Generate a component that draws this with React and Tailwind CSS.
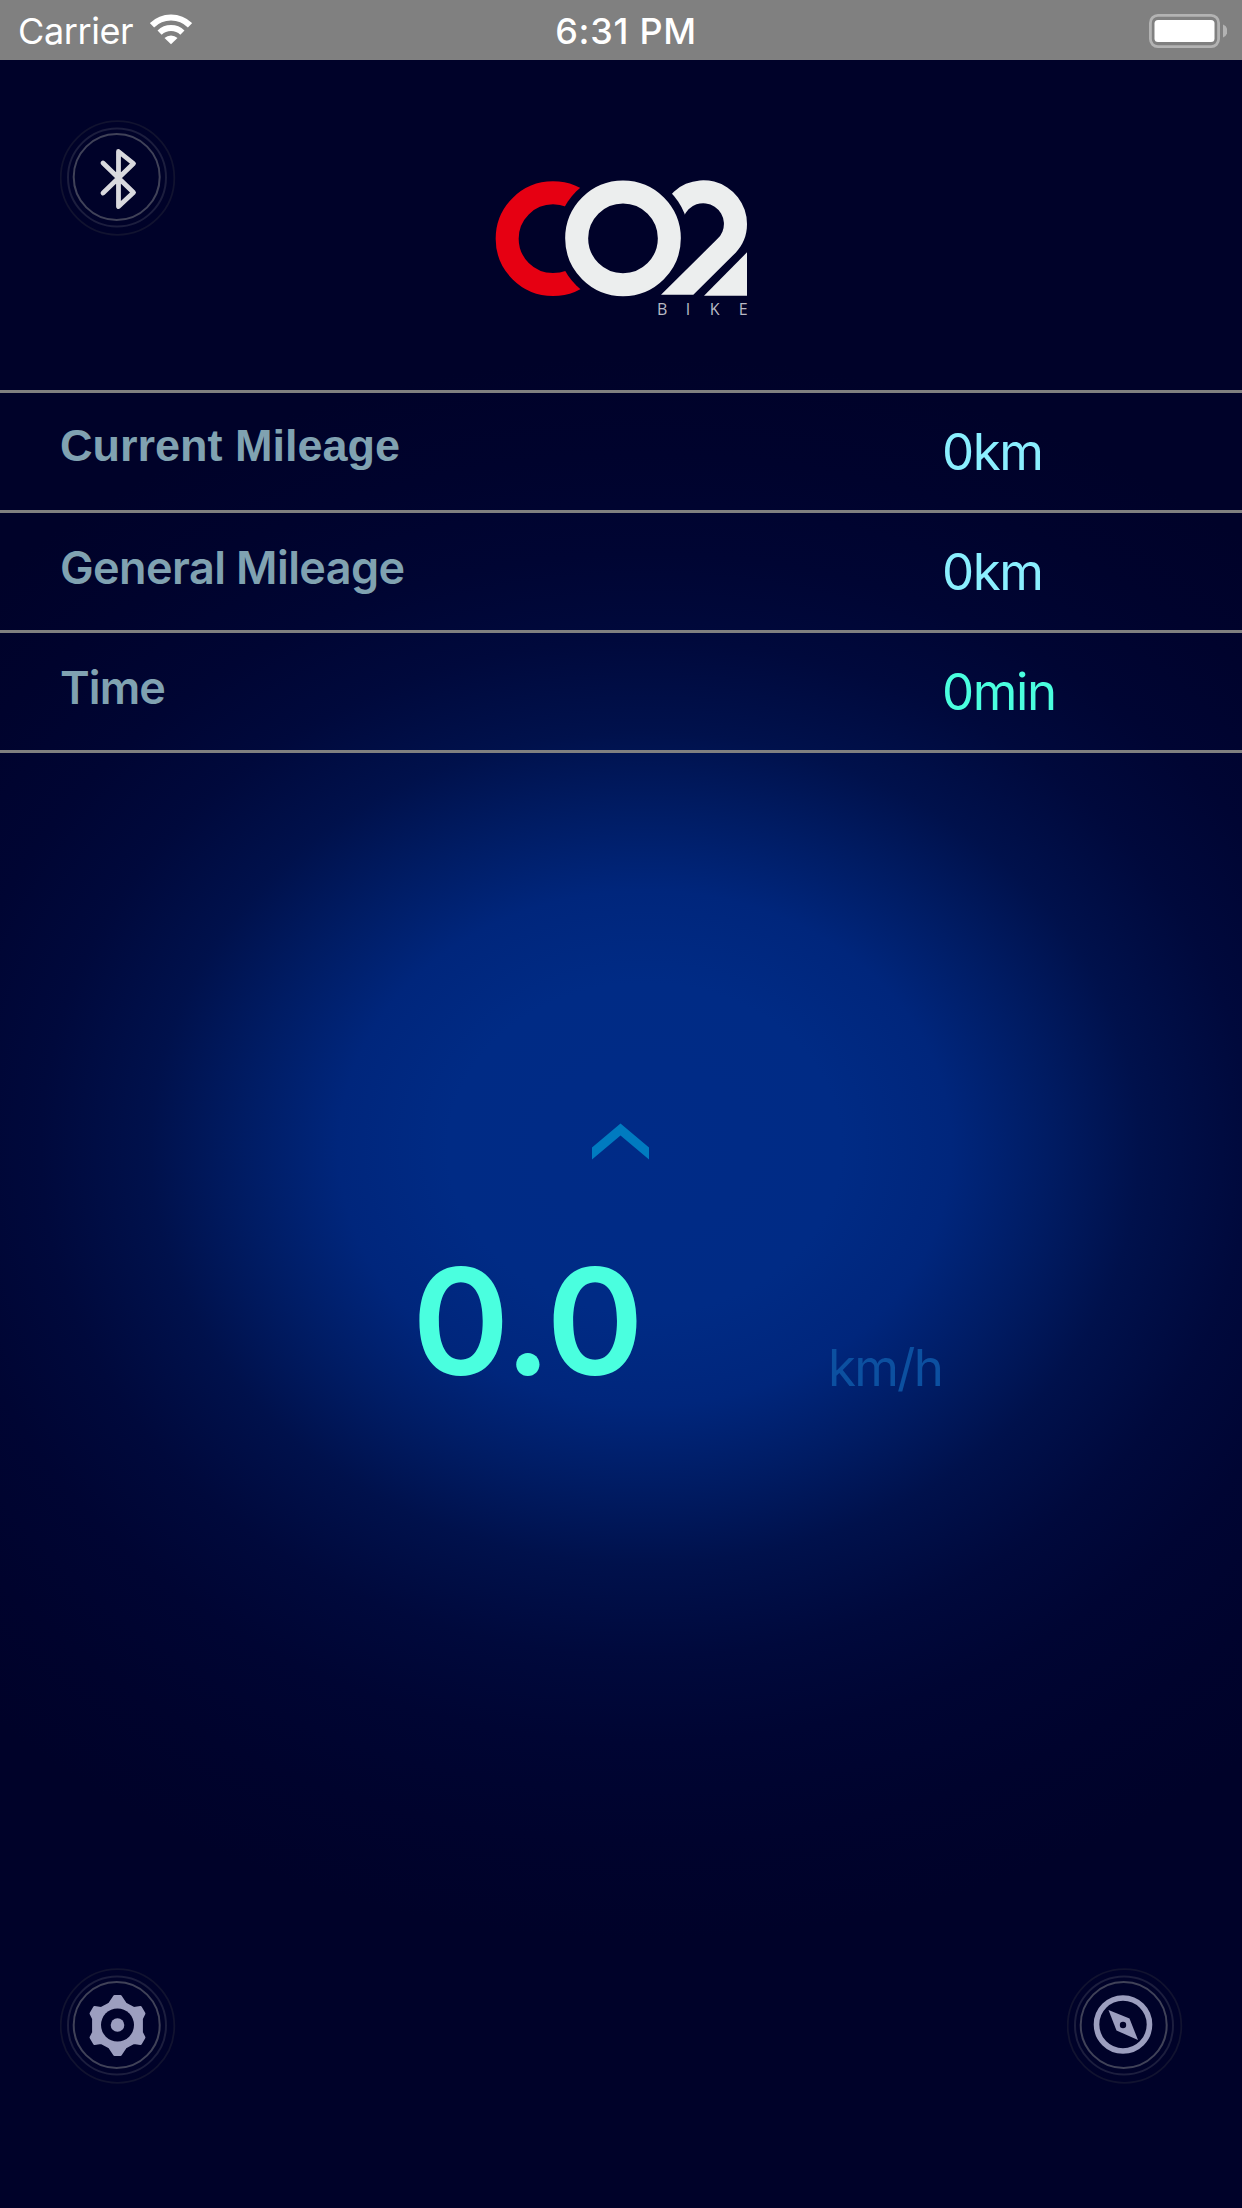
const stats = [
  {
    label: "Current Mileage",
    value: "0km",
    labelClass: "font-['Liberation_Sans',sans-serif] font-bold pt-[26px]",
    valueClass: "text-[#8aefff]",
  },
  {
    label: "General Mileage",
    value: "0km",
    labelClass: "font-semibold pt-[28px] tracking-[-0.6px]",
    valueClass: "text-[#8aefff]",
  },
  {
    label: "Time",
    value: "0min",
    labelClass: "font-semibold pt-[28px] tracking-[-0.9px]",
    valueClass: "text-[#4affdf]",
  },
];

function StatusBar() {
  return (
    <header className="grid grid-cols-3 items-center h-[60px] bg-[#808080] text-white text-[36px] leading-[60px]">
      <div className="flex items-center pl-[18px] pt-[1px] gap-[17px]">
        <span className="tracking-[-0.4px]">Carrier</span>
        <svg className="w-[42px] h-[31px] -mt-[3px]" viewBox="0 0 42 31" fill="none">
          <path d="M2 11.3 A27 27 0 0 1 40 11.3" stroke="white" strokeWidth="6" />
          <path d="M9.6 18.6 A16.5 16.5 0 0 1 32.4 18.6" stroke="white" strokeWidth="6" />
          <path d="M14.5 24 A9.5 9.5 0 0 1 27.5 24 L21 30.3 Z" fill="white" />
        </svg>
      </div>
      <span className="text-center font-medium tracking-[0.7px] pt-[1px] pl-[10px]">6:31 PM</span>
      <div className="flex justify-end pr-[15px]">
        <svg className="w-[78px] h-[34px]" viewBox="0 0 78 34">
          <rect x="1.4" y="1.4" width="68.2" height="31.2" rx="7.5" fill="none" stroke="#b3b3b3" strokeWidth="2.8" />
          <rect x="5.5" y="6" width="60" height="22" rx="3.5" fill="white" />
          <path d="M74 10.5 A7 7 0 0 1 74 23.5 Z" fill="#b3b3b3" />
        </svg>
      </div>
    </header>
  );
}

function Logo() {
  return (
    <svg className="w-[252px] h-[135px] overflow-visible" viewBox="75 60 756 405">
      <defs>
        {/* keeps a gap between the ring and its neighbours */}
        <mask id="gap" maskUnits="userSpaceOnUse" x="0" y="0" width="900" height="510">
          <rect x="0" y="0" width="900" height="510" fill="white" />
          <circle cx="459" cy="235" r="199" fill="black" />
        </mask>
      </defs>
      <circle cx="249" cy="236" r="137.5" fill="none" stroke="#e60012" strokeWidth="69" mask="url(#gap)" />
      <circle cx="459" cy="235" r="139" fill="none" stroke="#eceeee" strokeWidth="69" />
      <path
        d="M585 129 A131 131 0 0 1 831 192 C831 228 818 256 797 278 L670 404 H573 L741 238 A62 62 0 1 0 641 172 Z"
        fill="#eceeee"
        mask="url(#gap)"
      />
      <path d="M831 277 V407 H702 Z" fill="#eceeee" />
      <text x="561 647 719 806" y="464" fontSize="48" fill="#b9bac4" fontFamily="Open Sans, sans-serif">
        BIKE
      </text>
    </svg>
  );
}

// Round button with three fading rings, the icon is drawn on the same 116px canvas
function RingButton({ label, children }) {
  return (
    <button className="block w-[116px] h-[116px]" aria-label={label}>
      <svg className="w-full h-full" viewBox="0 0 116 116" fill="none">
        <circle cx="57.5" cy="58" r="56.8" stroke="#111330" strokeWidth="1.8" />
        <circle cx="57" cy="57.5" r="49" stroke="#1c1e3e" strokeWidth="2" />
        <circle cx="56.7" cy="57" r="43" stroke="#404258" strokeWidth="2" />
        {children}
      </svg>
    </button>
  );
}

export default function App() {
  return (
    <div className="flex flex-col w-[1242px] h-[2208px] overflow-hidden font-[Inter,sans-serif] bg-[#000229] bg-[radial-gradient(ellipse_785px_660px_at_645px_1148px,#002b87_0%,#002b85_25%,#00267c_39%,#001c64_51%,#00114c_63%,#00093c_77%,#000533_90%,#00032d_105%,#000229_120%)]">
      <StatusBar />

      <section className="flex items-start h-[330px] pl-[60px] pt-[60px]">
        <RingButton label="Bluetooth">
          <path
            d="M43 43 L73.5 72.5 L58.5 86.5 V31.5 L73.5 43.5 L43 73"
            stroke="#d9d9de"
            strokeWidth="4.8"
            strokeLinecap="round"
            strokeLinejoin="round"
          />
        </RingButton>
        <div className="ml-[319px] mt-[60px]">
          <Logo />
        </div>
      </section>

      <section className="border-t-3 border-[#808080]">
        {stats.map((s) => (
          <div key={s.label} className="flex h-[120px] border-b-3 border-[#808080]">
            <span className={`w-[942px] pl-[60px] text-[45px] leading-[54px] text-[#80a2b1] ${s.labelClass}`}>
              {s.label}
            </span>
            <span className={`pt-[29px] text-[51px] leading-[60px] tracking-[-1.4px] ${s.valueClass}`}>
              {s.value}
            </span>
          </div>
        ))}
      </section>

      <main className="flex-1">
        <svg className="w-[57px] h-[37px] ml-[592px] mt-[370px]" viewBox="0 0 57 37">
          <path d="M0 24.5 L28.5 0.5 L57 24.5 V36.5 L28.5 12.5 L0 36.5 Z" fill="#007bc0" />
        </svg>
        <div className="flex items-start mt-[71px] pl-[412px]">
          <span className="w-[416px] text-[148px] leading-[180px] pt-[1px] font-semibold text-[#4affdf] tracking-[-1.2px]">0.0</span>
          <span className="pt-[107px] text-[51px] leading-[60px] text-[#0c50a0] tracking-[-1.8px]">km/h</span>
        </div>
      </main>

      <footer className="flex justify-between pl-[60px] pr-[59px] pb-[124px]">
        <RingButton label="Settings">
          <path
            d="M54.5 28.5 H60.5 L65.5 36 L74 40.5 L80.5 39.5 L84 45.5 L81.5 50.5 V64.5 L84 69.5 L80.5 75.5 L74 74.5 L65.5 79 L60.5 86.5 H54.5 L49.5 79 L41 74.5 L34.5 75.5 L31 69.5 L33.5 64.5 V50.5 L31 45.5 L34.5 39.5 L41 40.5 L49.5 36 Z"
            fill="#9c9ebf"
            stroke="#9c9ebf"
            strokeWidth="2.8"
            strokeLinejoin="round"
          />
          <circle cx="57.5" cy="57" r="16.5" fill="#000229" />
          <circle cx="57.5" cy="57" r="6.8" fill="#9c9ebf" />
        </RingButton>
        <RingButton label="Navigation">
          <circle cx="56" cy="56.5" r="26.5" stroke="#9c9ebf" strokeWidth="5.6" />
          <path d="M41.5 42 L62.5 50.5 L71 72 L49.5 62.5 Z" fill="#9c9ebf" />
          <circle cx="56" cy="57" r="3.2" fill="#000229" />
        </RingButton>
      </footer>
    </div>
  );
}
